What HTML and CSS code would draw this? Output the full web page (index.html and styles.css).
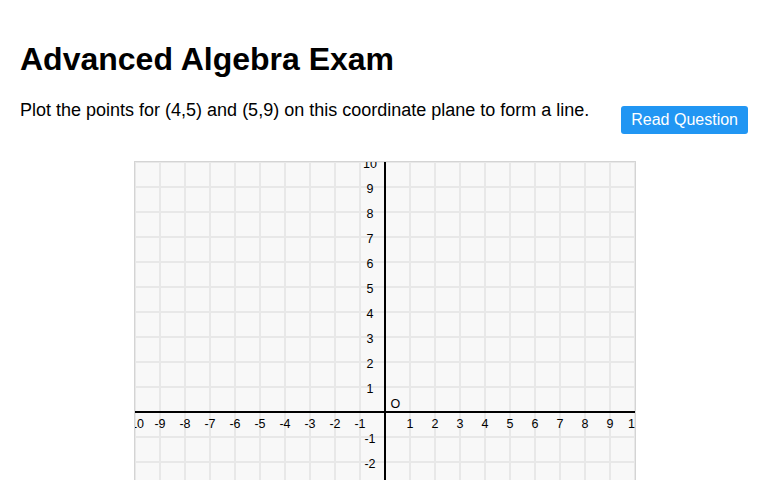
FILE: index.html
```html
<!DOCTYPE html>
<html lang="en">
<head>
<meta charset="utf-8">
<title>Advanced Algebra Exam</title>
<link rel="stylesheet" href="styles.css">
</head>
<body>
<main class="page">
  <h1 class="title">Advanced Algebra Exam</h1>
  <div class="question-row">
    <p class="question">Plot the points for (4,5) and (5,9) on this coordinate plane to form a line.</p>
    <button class="read-btn" type="button">Read Question</button>
  </div>
  <div class="board">
    <svg class="plane" width="500" height="500" viewBox="0 0 500 500">
      <path class="grid" d="M0 0V500M25 0V500M50 0V500M75 0V500M100 0V500M125 0V500M150 0V500M175 0V500M200 0V500M225 0V500M275 0V500M300 0V500M325 0V500M350 0V500M375 0V500M400 0V500M425 0V500M450 0V500M475 0V500M500 0V500M0 0H500M0 25H500M0 50H500M0 75H500M0 100H500M0 125H500M0 150H500M0 175H500M0 200H500M0 225H500M0 275H500M0 300H500M0 325H500M0 350H500M0 375H500M0 400H500M0 425H500M0 450H500M0 475H500M0 500H500"/>
      <path class="axis" d="M0 250H500M250 0V500"/>
      <g class="xlabels">
        <text x="0" y="266">-10</text>
        <text x="25" y="266">-9</text>
        <text x="50" y="266">-8</text>
        <text x="75" y="266">-7</text>
        <text x="100" y="266">-6</text>
        <text x="125" y="266">-5</text>
        <text x="150" y="266">-4</text>
        <text x="175" y="266">-3</text>
        <text x="200" y="266">-2</text>
        <text x="225" y="266">-1</text>
        <text x="275" y="266">1</text>
        <text x="300" y="266">2</text>
        <text x="325" y="266">3</text>
        <text x="350" y="266">4</text>
        <text x="375" y="266">5</text>
        <text x="400" y="266">6</text>
        <text x="425" y="266">7</text>
        <text x="450" y="266">8</text>
        <text x="475" y="266">9</text>
        <text x="500" y="266">10</text>
      </g>
      <g class="ylabels">
        <text x="235" y="6">10</text>
        <text x="235" y="31">9</text>
        <text x="235" y="56">8</text>
        <text x="235" y="81">7</text>
        <text x="235" y="106">6</text>
        <text x="235" y="131">5</text>
        <text x="235" y="156">4</text>
        <text x="235" y="181">3</text>
        <text x="235" y="206">2</text>
        <text x="235" y="231">1</text>
        <text x="235" y="281">-1</text>
        <text x="235" y="306">-2</text>
        <text x="235" y="331">-3</text>
        <text x="235" y="356">-4</text>
        <text x="235" y="381">-5</text>
        <text x="235" y="406">-6</text>
        <text x="235" y="431">-7</text>
        <text x="235" y="456">-8</text>
        <text x="235" y="481">-9</text>
        <text x="235" y="506">-10</text>
      </g>
      <text class="origin" x="255.5" y="245.5">O</text>
    </svg>
  </div>
</main>
</body>
</html>
```
FILE: styles.css
```css
html, body {
  margin: 0;
  padding: 0;
  background: #fff;
}

body {
  font-family: "Liberation Sans", Arial, sans-serif;
  color: #000;
}

.page {
  padding: 20px;
}

.title {
  margin: 21px 0 21px;
  font-size: 32px;
  font-weight: bold;
  line-height: 37px;
}

.question-row {
  display: flex;
  align-items: flex-start;
  justify-content: space-between;
  gap: 20px;
}

.question {
  margin: 0;
  padding-top: 1px;
  font-size: 18px;
  line-height: 21px;
}

.read-btn {
  flex: none;
  margin-top: 7px;
  padding: 5px 10px;
  border: none;
  border-radius: 3px;
  background: #2196f3;
  color: #fff;
  font-family: "Liberation Sans", Arial, sans-serif;
  font-size: 16px;
  line-height: 18px;
  cursor: pointer;
}

.board {
  width: 500px;
  height: 500px;
  margin: 27px 0 0 114px;
  border: 1px solid #d4d4d4;
  background: #f8f8f8;
  overflow: hidden;
}

.plane {
  display: block;
  font-family: "Liberation Sans", Arial, sans-serif;
  font-size: 12.5px;
}

.grid {
  fill: none;
  stroke: #e8e8e8;
  stroke-width: 2;
}

.axis {
  fill: none;
  stroke: #000;
  stroke-width: 2;
}

.xlabels text,
.ylabels text {
  fill: #000;
  text-anchor: middle;
}

.origin {
  fill: #000;
}
```
